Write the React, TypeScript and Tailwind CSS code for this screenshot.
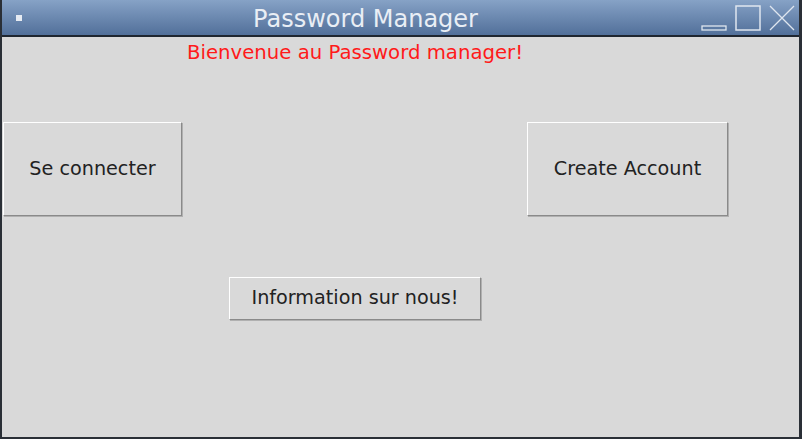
import React from 'react'

function TkButton({ label, className }: { label: string; className: string }) {
    return (
        <button
            className={`flex items-center justify-center bg-[#d9d9d9] text-[#222] border border-t-white border-l-white border-b-[#8a8a8a] border-r-[#8a8a8a] shadow-[1px_1px_0_#b0b0b0] ${className}`}
        >
            {label}
        </button>
    )
}

function App() {
    return (
        <div className="w-[802px] h-[439px] flex flex-col bg-[#d9d9d9] border-l-2 border-r-[3px] border-b-2 border-[#2a2f36] font-['DejaVu_Sans',sans-serif] overflow-hidden">
            {/* title bar */}
            <div className="h-[37px] shrink-0 flex items-center relative bg-gradient-to-b from-[#86a2c6] to-[#52709a] border-b-2 border-[#1f2630]">
                <div className="w-[6px] h-[6px] bg-[#e6ebf2] ml-[14px]"></div>
                <div className="flex-1 text-center text-[24px] text-[#e9eef5] leading-none pl-[8px] pt-[3px]">Password Manager</div>
                <div className="flex items-end gap-[8px] mr-[4px]">
                    <svg width="26" height="28" viewBox="0 0 26 28">
                        <rect x="1" y="22" width="24" height="4" fill="none" stroke="#dfe6ef" strokeWidth="1.3" />
                    </svg>
                    <svg width="26" height="28" viewBox="0 0 26 28">
                        <rect x="1" y="2" width="24" height="24" fill="none" stroke="#dfe6ef" strokeWidth="1.5" />
                    </svg>
                    <svg width="26" height="28" viewBox="0 0 26 28">
                        <path d="M1 2 L25 26 M25 2 L1 26" stroke="#dfe6ef" strokeWidth="1.3" />
                    </svg>
                </div>
            </div>

            {/* body */}
            <div className="flex-1 flex flex-col">
                <div className="pl-[185px] pt-[4px] text-[19.7px] text-[#ff1a1a] leading-[24px]">
                    Bienvenue au Password manager!
                </div>
                <div className="flex justify-between mt-[57px] pl-[1px] pr-[71px]">
                    <TkButton label="Se connecter" className="w-[179px] h-[94px] text-[19.2px]" />
                    <TkButton label="Create Account" className="w-[201px] h-[94px] text-[19.2px]" />
                </div>
                <div className="flex pl-[227px] mt-[61px]">
                    <TkButton label="Information sur nous!" className="w-[252px] h-[43px] text-[19.2px]" />
                </div>
            </div>
        </div>
    )
}

export default App
